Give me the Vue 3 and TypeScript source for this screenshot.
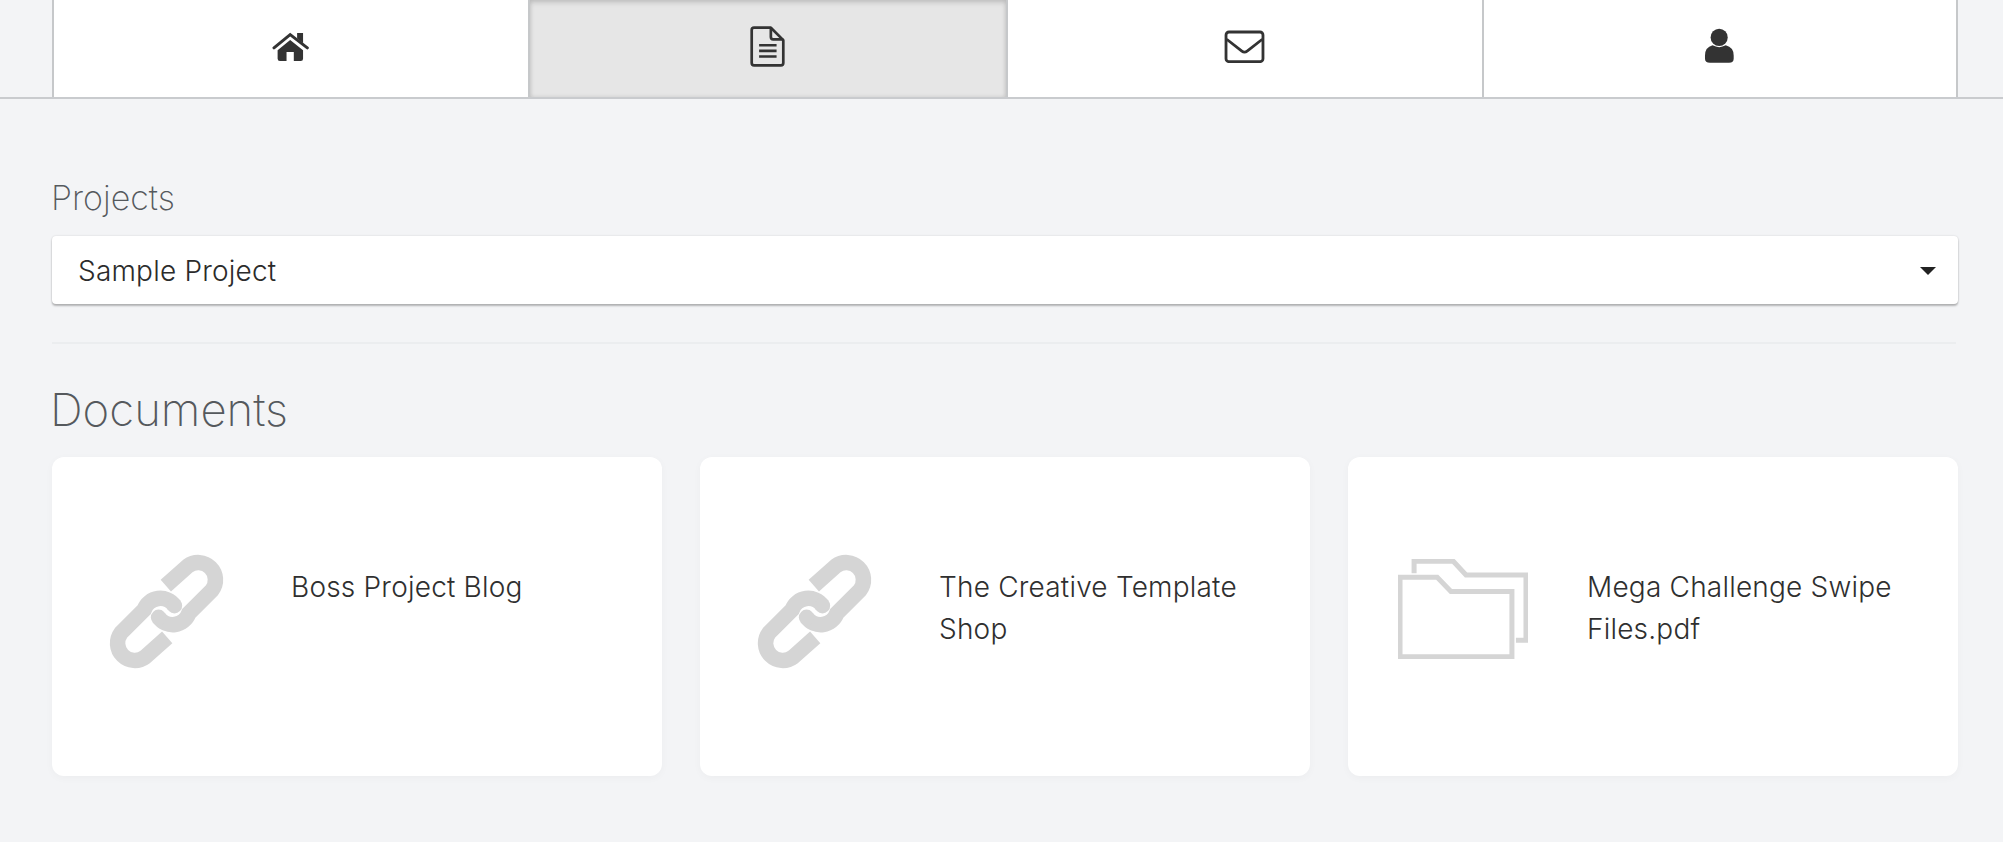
<template>
  <div class="page">
    <nav class="tabs">
      <a v-for="tab in tabs" :key="tab.name" class="tab" :class="{ active: tab.name === activeTab }">
        <svg v-if="tab.name === 'home'" class="tab-icon" viewBox="96 60 112 92" width="37" height="31">
          <path d="M102 110 L151 70 L203 110" fill="none" stroke="#333" stroke-width="9" stroke-linecap="round" />
          <path d="M172 65 H190 V96 L172 82 Z" fill="#333" />
          <path d="M113 117 L151 86 L190 117 V143 Q190 150 183 150 H162 V123 H140 V150 H120 Q113 150 113 143 Z" fill="#333" />
        </svg>
        <svg v-else-if="tab.name === 'docs'" class="tab-icon" viewBox="88 45 104 122" width="35" height="41">
          <path d="M150 50 H100 Q93 50 93 57 V155 Q93 162 100 162 H180 Q187 162 187 155 V87 Z" fill="none" stroke="#333" stroke-width="8" stroke-linejoin="round" />
          <path d="M150 50 V78 Q150 85 157 85 H187" fill="none" stroke="#333" stroke-width="8" />
          <path d="M115 102 H167 M115 119 H167 M115 136 H167" stroke="#333" stroke-width="7.5" />
        </svg>
        <svg v-else-if="tab.name === 'mail'" class="tab-icon" viewBox="70 60 122 100" width="41" height="33">
          <rect x="75" y="66" width="112" height="90" rx="9" fill="none" stroke="#333" stroke-width="8.5" />
          <path d="M77 88 L123 124 Q131 130 139 124 L185 88" fill="none" stroke="#333" stroke-width="8.5" />
        </svg>
        <svg v-else class="tab-icon" viewBox="72 52 94 108" width="31" height="36">
          <circle cx="118" cy="80" r="26" fill="#333" />
          <path d="M98 104 Q118 115 138 104 Q162 110 162 135 V145 Q162 157 148 157 H90 Q75 157 75 145 V135 Q75 110 98 104 Z" fill="#333" />
        </svg>
      </a>
    </nav>

    <main class="content">
      <label class="field-label">Projects</label>
      <div class="select">
        <span>Sample Project</span>
        <i class="caret"></i>
      </div>
      <hr class="divider" />
      <h2 class="heading">Documents</h2>
      <div class="cards">
        <div v-for="doc in documents" :key="doc.title" class="card">
          <div class="card-icon">
            <svg v-if="doc.kind === 'link'" class="link" viewBox="66 81 328 328" width="113" height="113">
              <g v-for="turn in [0, 180]" :key="turn" :transform="`rotate(${turn} 230 245)`">
                <path d="M228 170 L292 113 A50 50 0 0 1 362 183 L295 250 A50 50 0 0 1 207 262" fill="none" stroke="#d5d5d5" stroke-width="45" />
                <circle cx="207" cy="262" r="22.5" fill="#d5d5d5" />
              </g>
            </svg>
            <svg v-else viewBox="55 58 388 297" width="130" height="100" class="folder">
              <path d="M103 100 V64 H220 L258 105 H437 V300 H407" fill="none" stroke="#d5d5d5" stroke-width="15" />
              <path d="M61 349 V112 H172 L213 154 H395 V349 Z" fill="none" stroke="#d5d5d5" stroke-width="15" />
            </svg>
          </div>
          <p class="card-title">{{ doc.title }}</p>
        </div>
      </div>
    </main>
  </div>
</template>

<script setup lang="ts">
const activeTab = 'docs'

const tabs = [{ name: 'home' }, { name: 'docs' }, { name: 'mail' }, { name: 'user' }]

const documents = [
  { title: 'Boss Project Blog', kind: 'link' },
  { title: 'The Creative Template Shop', kind: 'link' },
  { title: 'Mega Challenge Swipe Files.pdf', kind: 'folder' }
]
</script>

<style>
html,
body {
  margin: 0;
  background: #f3f4f6;
}
</style>

<style scoped>
.page {
  height: 842px;
  overflow: hidden;
  background: #f3f4f6;
  font-family: Inter, Lato, sans-serif;
  color: #2b2b2b;
}

.tabs {
  display: flex;
  height: 97px;
  padding: 0 45px 0 52px;
  border-bottom: 2px solid #c9cbce;
}

.tab {
  flex: none;
  box-sizing: border-box;
  width: 476px;
  display: flex;
  align-items: center;
  justify-content: center;
  background: #fff;
  border-left: 2px solid #c6c8ca;
  padding: 0 2px 5px 0;
}

.tab:nth-child(2) {
  width: 478px;
}

.tab:last-child {
  border-right: 2px solid #c6c8ca;
}

.tab.active {
  background: #e6e6e6;
  box-shadow: inset 0 3px 5px rgba(0, 0, 0, 0.125), inset 0 0 4px rgba(0, 0, 0, 0.1);
}

.content {
  padding: 0 45px 0 52px;
}

.field-label {
  display: block;
  margin: 78px 0 0 -1px;
  font-size: 34px;
  font-weight: 200;
  line-height: 41px;
  color: #55595d;
}

.select {
  display: flex;
  align-items: center;
  justify-content: space-between;
  box-sizing: border-box;
  height: 68px;
  margin-top: 18px;
  padding: 2px 22px 0 26px;
  background: #fff;
  border-radius: 4px;
  box-shadow: 0 2px 2px rgba(0, 0, 0, 0.25), 0 0 2px rgba(0, 0, 0, 0.15);
  font-size: 28px;
  font-weight: 300;
  letter-spacing: 0.2px;
}

.caret {
  border-left: 8px solid transparent;
  border-right: 8px solid transparent;
  border-top: 8px solid #222;
}

.divider {
  height: 2px;
  margin: 38px 2px 0 0;
  border: 0;
  background: #ebedef;
}

.heading {
  margin: 39px 0 0 -2px;
  font-size: 45.5px;
  font-weight: 200;
  line-height: 54px;
  color: #55595d;
}

.cards {
  display: grid;
  grid-template-columns: repeat(3, 610px);
  gap: 38px;
  margin-top: 20px;
}

.card {
  display: flex;
  height: 319px;
  padding: 98px 20px 0 58px;
  box-sizing: border-box;
  background: #fff;
  border-radius: 12px;
  box-shadow: 0 2px 8px rgba(0, 0, 0, 0.03);
}

.card-icon {
  flex: none;
  width: 181px;
  height: 113px;
}

.link {
  overflow: visible;
}

.folder {
  margin: 4px 0 0 -8px;
}

.card-title {
  margin: 11px 0 0;
  font-size: 28px;
  line-height: 42px;
  font-weight: 300;
  letter-spacing: 0.2px;
  color: #2f2f2f;
}
</style>
